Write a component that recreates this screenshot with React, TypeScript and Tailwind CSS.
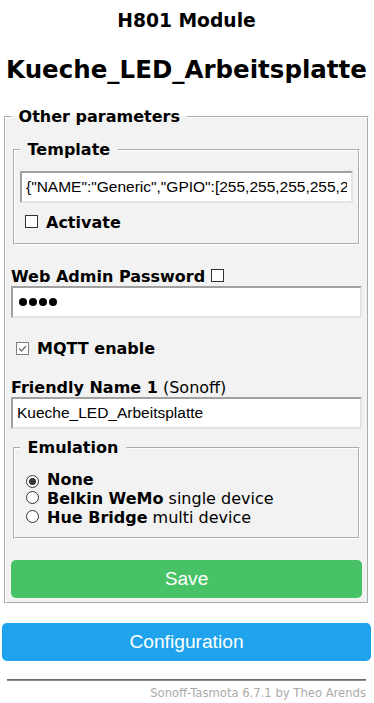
import type { ReactNode } from "react";

const nb = "\u00a0";

const inputCls =
  "block h-[32px] w-full border-2 border-t-[#a0a0a0] border-l-[#a0a0a0] border-r-[#e3e3e3] border-b-[#e3e3e3] bg-white px-[4px] font-['Liberation_Sans',Arial,sans-serif] text-[15.5px] text-black outline-none";

function CheckBox({ checked = false }: { checked?: boolean }) {
  return (
    <span
      className={`inline-flex h-[13px] w-[13px] shrink-0 items-center justify-center border bg-white ${
        checked ? "border-[#808080]" : "border-[#333]"
      }`}
    >
      {checked && (
        <svg viewBox="0 0 11 11" className="h-[11px] w-[11px]">
          <path d="M2 5.5 L4.5 8 L9 3" fill="none" stroke="#6f6f6f" strokeWidth="1.3" />
        </svg>
      )}
    </span>
  );
}

function Radio({ checked = false }: { checked?: boolean }) {
  return (
    <span className="inline-flex h-[13px] w-[13px] shrink-0 items-center justify-center rounded-full border border-[#333] bg-white">
      {checked && <span className="h-[7px] w-[7px] rounded-full bg-[#333]" />}
    </span>
  );
}

function Group({ title, className, children }: { title: string; className: string; children: ReactNode }) {
  return (
    <fieldset className={`mx-[2px] border-2 border-white [border-style:groove] bg-[#f2f2f2] px-[5px] pt-[5px] ${className}`}>
      <legend className="px-[2px] font-bold leading-[19px]">
        {nb}
        {title}
        {nb}
      </legend>
      {children}
    </fieldset>
  );
}

const emulation = [
  { name: "None", note: "", checked: true },
  { name: "Belkin WeMo", note: " single device", checked: false },
  { name: "Hue Bridge", note: " multi device", checked: false },
];

export default function App() {
  return (
    <div className="min-h-screen bg-white font-['DejaVu_Sans',Verdana,sans-serif] text-[16px] text-black">
      <div className="pl-[2px] pr-[3px]">
        <h3 className="pt-[10px] text-center text-[18.72px] font-bold leading-[22px]">H801 Module</h3>
        <h2 className="mt-[24px] text-center text-[24.5px] font-bold leading-[28px] whitespace-nowrap">
          Kueche_LED_Arbeitsplatte
        </h2>

        {/* Other parameters */}
        <Group title="Other parameters" className="mt-[23px] pb-[4px]">
          <Group title="Template" className="mt-[9px] pb-[11px]">
            <input
              className={`${inputCls} mt-[7px]`}
              readOnly
              value={'{"NAME":"Generic","GPIO":[255,255,255,255,255,255,255,255,255,255,255,255,255],"FLAG":1,"BASE":18}'}
            />
            <div className="mt-[10px] flex h-[19px] items-center">
              <span className="ml-[5px]">
                <CheckBox />
              </span>
              <b className="ml-[8px] leading-[19px]">Activate</b>
            </div>
          </Group>

          <div className="mt-[22px] flex h-[19px] items-center">
            <b className="leading-[19px]">Web Admin Password</b>
            <span className="ml-[6px]">
              <CheckBox />
            </span>
          </div>
          <div className={`${inputCls} flex items-center gap-[2px] pl-[6px]`}>
            {[0, 1, 2, 3].map((i) => (
              <span key={i} className="h-[8px] w-[8px] rounded-full bg-black" />
            ))}
          </div>

          <div className="mt-[21px] flex h-[19px] items-center">
            <span className="ml-[5px]">
              <CheckBox checked />
            </span>
            <b className="ml-[8px] leading-[19px]">MQTT enable</b>
          </div>

          <div className="mt-[20px] h-[19px] leading-[19px]">
            <b>Friendly Name 1</b> (Sonoff)
          </div>
          <input className={inputCls} readOnly value="Kueche_LED_Arbeitsplatte" />

          <Group title="Emulation" className="mt-[9px] pb-[10px]">
            <div className="mt-[8px]">
              {emulation.map((e) => (
                <div key={e.name} className="flex h-[19px] items-center whitespace-nowrap leading-[19px]">
                  <span className="ml-[6px]">
                    <Radio checked={e.checked} />
                  </span>
                  <span className="ml-[8px]">
                    <b>{e.name}</b>
                    {e.note}
                  </span>
                </div>
              ))}
            </div>
          </Group>

          <button className="mt-[21px] block h-[38px] w-full rounded-[4.8px] bg-[#47c266] font-['Liberation_Sans',Arial,sans-serif] text-[19.2px] text-white">
            Save
          </button>
        </Group>

        <button className="mt-[19px] block h-[38px] w-full rounded-[4.8px] bg-[#1fa3ec] font-['Liberation_Sans',Arial,sans-serif] text-[19.2px] text-white">
          Configuration
        </button>

        {/* footer */}
        <div className="mt-[18px] px-[5px]">
          <div className="h-[2px] border-t border-b border-t-[#6a6a6a] border-b-[#8a8a8a]" />
          <div className="mt-[6px] text-right text-[11.6px] leading-[13px] text-[#aaa]">
            Sonoff-Tasmota 6.7.1 by Theo Arends
          </div>
        </div>
      </div>
    </div>
  );
}
